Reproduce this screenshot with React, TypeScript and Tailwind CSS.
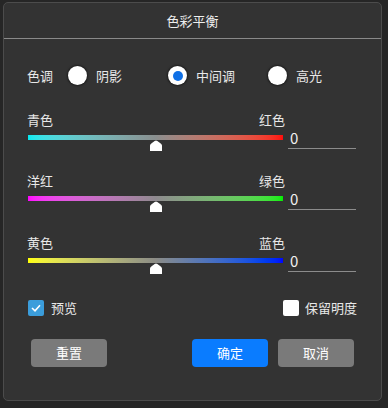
import React from "react"

const font = "font-['Noto_Sans_CJK_SC','Noto_Sans',sans-serif]"

function Radio({ checked }: { checked?: boolean }) {
  return (
    <span className="flex h-[19px] w-[19px] items-center justify-center rounded-full bg-white shadow-[0_0_2px_1px_rgba(0,0,0,0.45)]">
      {checked && <span className="h-[10px] w-[10px] rounded-full bg-[#0f70e6]" />}
    </span>
  )
}

function Thumb() {
  return (
    <svg width="12" height="11" viewBox="0 0 12 11" className="absolute left-[122px] top-[5px]">
      <path d="M6 0.5 C7 0.5 12 4 12 5.5 L12 11 L0 11 L0 5.5 C0 4 5 0.5 6 0.5 Z" fill="#ffffff" />
    </svg>
  )
}

interface SliderProps {
  left: string
  right: string
  gradient: string
  className?: string
}

function ColorSlider({ left, right, gradient, className = "" }: SliderProps) {
  return (
    <div className={`flex flex-col ${className}`}>
      <div className="flex w-[257px] justify-between text-[13px] leading-[16px] text-[#e8e8e8]">
        <span className="-ml-px">{left}</span>
        <span>{right}</span>
      </div>
      <div className="flex h-[21px] items-start">
        <div className={`relative mt-[7px] h-[5px] w-[255px] ${gradient}`}>
          <Thumb />
        </div>
        <div className="ml-[5px] h-[21px] w-[68px] border-b border-[#8c8c8c] pl-[2px] text-[15px] leading-[20px] text-[#f0f0f0]">
          0
        </div>
      </div>
    </div>
  )
}

export default function App() {
  return (
    <div className={`h-[408px] w-[388px] bg-[#262626] pl-[3px] pt-[2px] ${font}`}>
      <div className="h-[399px] w-[379px] rounded-[5px] border border-[#4c4c4c] bg-[#333333]">
        <div className="flex h-[36px] items-center justify-center border-b border-[#8a8a8a] text-[13px] text-[#eeeeee]">
          色彩平衡
        </div>

        <div className="pl-[24px]">
          {/* tone */}
          <div className="mt-[27px] flex h-[19px] items-center text-[13px] text-[#e8e8e8]">
            <span className="-ml-px w-[41px]">色调</span>
            <div className="flex w-[100px] items-center">
              <Radio />
              <span className="ml-[9px]">阴影</span>
            </div>
            <div className="flex w-[100px] items-center">
              <Radio checked />
              <span className="ml-[9px]">中间调</span>
            </div>
            <div className="flex items-center">
              <Radio />
              <span className="ml-[9px]">高光</span>
            </div>
          </div>

          <ColorSlider
            className="mt-[27px]"
            left="青色"
            right="红色"
            gradient="bg-linear-to-r from-[#00eaf0] via-[#8a8f8f] to-[#ff0a0a]"
          />
          <ColorSlider
            className="mt-[24px]"
            left="洋红"
            right="绿色"
            gradient="bg-linear-to-r from-[#ff00ff] via-[#8f8a8f] to-[#00ee00]"
          />
          <ColorSlider
            className="mt-[25px]"
            left="黄色"
            right="蓝色"
            gradient="bg-linear-to-r from-[#ffff00] via-[#8c8c86] to-[#0000ff]"
          />

          {/* options */}
          <div className="mt-[28px] flex h-[16px] items-center text-[13px] text-[#e8e8e8]">
            <span className="flex h-[16px] w-[16px] items-center justify-center rounded-[2px] bg-[#3b9ddb]">
              <svg width="10" height="8" viewBox="0 0 10 8">
                <path d="M1 4 L4 6.8 L9 1.2" fill="none" stroke="#ffffff" strokeWidth="1.6" />
              </svg>
            </span>
            <span className="ml-[7px]">预览</span>
            <span className="ml-[206px] h-[16px] w-[16px] rounded-[2px] bg-white" />
            <span className="ml-[6px]">保留明度</span>
          </div>

          {/* buttons */}
          <div className="mt-[23px] flex text-[13px] text-white">
            <button className="ml-[3px] h-[28px] w-[76px] rounded-[4px] bg-[#7a7a7a]">重置</button>
            <button className="ml-[85px] h-[28px] w-[76px] rounded-[4px] bg-[#0a7cff]">确定</button>
            <button className="ml-[10px] h-[28px] w-[76px] rounded-[4px] bg-[#7a7a7a]">取消</button>
          </div>
        </div>
      </div>
    </div>
  )
}
